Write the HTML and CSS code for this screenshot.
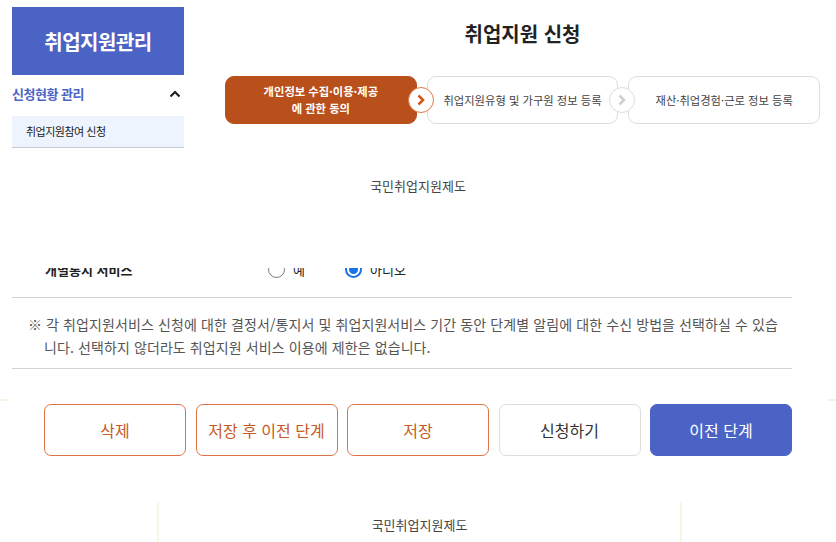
FILE: index.html
```html
<!DOCTYPE html>
<html lang="ko">
<head>
    <meta charset="UTF-8">
    <meta name="viewport" content="width=device-width, initial-scale=1.0">
    <title>취업지원 신청</title>
    <link rel="stylesheet" href="styles.css">
</head>
<body>

    <div class="top">
        <div class="side">
            <div class="sideTitle">취업지원관리</div>
            <div class="sideMenu">
                <span>신청현황 관리</span>
                <svg width="12" height="8" viewBox="0 0 12 8"><path d="M1.5 6.5 L6 2 L10.5 6.5" fill="none" stroke="#222" stroke-width="2.2"/></svg>
            </div>
            <div class="sideSub">취업지원참여 신청</div>
        </div>

        <div class="main">
            <div class="pageTitle">취업지원 신청</div>
            <div class="steps">
                <div class="step active">개인정보 수집·이용·제공<br>에 관한 동의</div>
                <div class="step">취업지원유형 및 가구원 정보 등록</div>
                <div class="step">재산·취업경험·근로 정보 등록</div>

                <div class="arrow on first">
                    <svg width="10" height="12" viewBox="0 0 10 12"><path d="M2.5 1.5 L7 6 L2.5 10.5" fill="none" stroke="#d2581d" stroke-width="2.6"/></svg>
                </div>
                <div class="arrow second">
                    <svg width="10" height="12" viewBox="0 0 10 12"><path d="M2.5 1.5 L7 6 L2.5 10.5" fill="none" stroke="#cfcfcf" stroke-width="2.6"/></svg>
                </div>
            </div>
        </div>
    </div>

    <div class="brand">국민취업지원제도</div>

    <div class="cutRow">
        <div class="radioRow">
            <div class="radioLabel">개별통지 서비스</div>
            <div class="radio"><span class="dot"></span>예</div>
            <div class="radio checked"><span class="dot"></span>아니오</div>
        </div>
    </div>

    <div class="notice">
        <p>※ 각 취업지원서비스 신청에 대한 결정서/통지서 및 취업지원서비스 기간 동안 단계별 알림에 대한 수신 방법을 선택하실 수 있습니다. 선택하지 않더라도 취업지원 서비스 이용에 제한은 없습니다.</p>
    </div>

    <div class="edge"></div>

    <div class="btns">
        <div class="btn orange">삭제</div>
        <div class="btn orange">저장 후 이전 단계</div>
        <div class="btn orange">저장</div>
        <div class="btn gray">신청하기</div>
        <div class="btn blue">이전 단계</div>
    </div>

    <div class="footer">국민취업지원제도</div>

</body>
</html>
```

FILE: styles.css
```css
body{
    margin: 0;
    background-color: white;
    font-family: "Noto Sans CJK KR", "Noto Sans", sans-serif;
    color: #333;
    width: 836px;
    overflow: hidden;
}

.top{
    display: flex;
    padding: 7px 0 0 12px;
}

.side{
    width: 172px;
}

.sideTitle{
    height: 68px;
    background-color: #4b63c5;
    color: white;
    font-size: 20px;
    font-weight: bold;
    display: flex;
    align-items: center;
    justify-content: center;
    letter-spacing: -0.5px;
}

.sideMenu{
    box-sizing: border-box;
    height: 41px;
    padding: 0 3px 4px 0;
    display: flex;
    align-items: center;
    justify-content: space-between;
    color: #4b63c5;
    font-size: 13px;
    font-weight: bold;
    letter-spacing: -0.5px;
}

.sideSub{
    height: 31px;
    background-color: #eef4fd;
    border-bottom: 1px solid #c9ccd4;
    font-size: 11px;
    line-height: 31px;
    padding-left: 14px;
    color: #222;
    letter-spacing: -0.5px;
}

.main{
    margin-left: 41px;
    width: 595px;
}

.pageTitle{
    margin-top: 12px;
    line-height: 30px;
    text-align: center;
    font-size: 20px;
    font-weight: bold;
    color: #222;
}

.steps{
    margin-top: 27px;
    display: flex;
    gap: 10px;
    position: relative;
}

.step{
    box-sizing: border-box;
    width: 192px;
    height: 48px;
    border: 1px solid #ddd;
    border-radius: 9px;
    display: flex;
    align-items: center;
    justify-content: center;
    text-align: center;
    font-size: 11.3px;
    line-height: 17px;
    color: #444;
}

.step.active{
    background-color: #b94f1a;
    border-color: #b94f1a;
    color: white;
    font-weight: bold;
}

.arrow{
    position: absolute;
    top: 11px;
    width: 24px;
    height: 24px;
    border-radius: 50%;
    background-color: white;
    border: 1px solid #ddd;
    display: flex;
    align-items: center;
    justify-content: center;
}

.arrow.on{
    border-color: #e0784a;
}

.arrow.first{
    left: 183px;
}

.arrow.second{
    left: 384px;
}

.brand{
    margin-top: 28px;
    text-align: center;
    font-size: 13px;
    line-height: 20px;
    color: #444;
}

.cutRow{
    margin-top: 72px;
    height: 12px;
    overflow: hidden;
}

.radioRow{
    margin-top: -10px;
    display: flex;
    align-items: center;
    height: 22px;
    font-size: 13px;
    color: #222;
}

.radioLabel{
    width: 223px;
    padding-left: 45px;
    font-weight: bold;
}

.radio{
    display: flex;
    align-items: center;
    gap: 8px;
    width: 77px;
}

.dot{
    box-sizing: border-box;
    width: 17px;
    height: 17px;
    border-radius: 50%;
    border: 1px solid #777;
}

.radio.checked .dot{
    border: 2px solid #1a73e8;
    background: radial-gradient(circle, #1a73e8 4px, white 5px);
}

.notice{
    margin: 17px 0 0 12px;
    width: 780px;
    border-top: 1px solid #d4d4d4;
    border-bottom: 1px solid #d4d4d4;
}

.notice p{
    margin: 0;
    padding: 15px 10px 9px 32px;
    text-indent: -16px;
    font-size: 14px;
    line-height: 23px;
    color: #555;
    letter-spacing: 0.1px;
    word-break: break-all;
}

.edge{
    margin-top: 30px;
    height: 2px;
    background: linear-gradient(to right, #eefadf 8px, white 8px, white 828px, #eefadf 828px);
}

.btns{
    margin: 3px 0 0 44px;
    display: flex;
    gap: 9.5px;
}

.btn{
    box-sizing: border-box;
    width: 142px;
    height: 52px;
    border-radius: 7px;
    border: 1px solid #ddd;
    display: flex;
    align-items: center;
    justify-content: center;
    font-size: 16px;
}

.btn.orange{
    border-color: #de7445;
    color: #c65a25;
}

.btn.gray{
    color: #333;
}

.btn.blue{
    background-color: #4b63c5;
    border-color: #4b63c5;
    color: white;
}

.footer{
    margin: 46px 0 0 157px;
    width: 521px;
    height: 42px;
    border-left: 2px solid #f2fae6;
    border-right: 2px solid #f2fae6;
    text-align: center;
    font-size: 13px;
    line-height: 46px;
    color: #444;
}
```
